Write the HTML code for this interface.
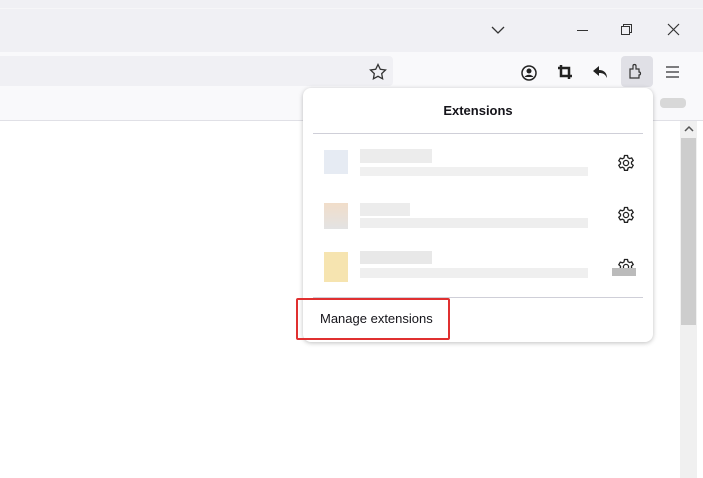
<!DOCTYPE html><html><head><style>
body{margin:0;width:703px;height:478px;overflow:hidden;background:#fff;font-family:"Liberation Sans",sans-serif;position:relative}
.a{position:absolute}
svg{position:absolute}
</style></head><body>
<div class="a" style="left:0;top:0;width:703px;height:52px;background:#f0f0f4"></div>
<div class="a" style="left:0;top:8px;width:703px;height:1px;background:#f6f6f8"></div>
<div class="a" style="left:0;top:52px;width:703px;height:36px;background:#f9f9fb"></div>
<div class="a" style="left:0;top:56px;width:393px;height:30px;background:#f0f0f4;border-radius:0 4px 4px 0"></div>
<div class="a" style="left:0;top:88px;width:703px;height:32px;background:#f9f9fb;border-bottom:1px solid #e0e0e6"></div>
<svg style="left:490px;top:24px" width="16" height="12"><path d="M2 3l6 6 6-6" stroke="#333" fill="none" stroke-width="1.3"/></svg>
<div class="a" style="left:577px;top:30px;width:11px;height:1px;background:#333"></div>
<svg style="left:620px;top:23px" width="14" height="14"><rect x="1.5" y="3.5" width="8" height="8" fill="none" stroke="#333"/><path d="M3.5 3.5V1.5h8v8h-2" fill="none" stroke="#333"/></svg>
<svg style="left:667px;top:23px" width="14" height="14"><path d="M1 1l11 11M12 1L1 12" stroke="#333" stroke-width="1.2"/></svg>
<svg style="left:369px;top:63px" width="18" height="18"><path d="M9 1.5l2.3 4.8 5.2.7-3.8 3.6.9 5.2L9 13.3l-4.6 2.5.9-5.2L1.5 7l5.2-.7z" fill="none" stroke="#333" stroke-width="1.3"/></svg>
<svg style="left:520px;top:64px" width="18" height="18"><circle cx="9" cy="9" r="7" fill="none" stroke="#222" stroke-width="1.5"/><circle cx="9" cy="7" r="2.5" fill="#222"/><path d="M4.5 13c2-3 7-3 9 0" fill="#222"/></svg>
<svg style="left:557px;top:64px" width="16" height="16"><path d="M4 1v11h11M1 4h11v11" fill="none" stroke="#222" stroke-width="2.5"/></svg>
<svg style="left:592px;top:64px" width="18" height="16"><path d="M7 2L1 7l6 5V9c4 0 6 1 8 5 0-5-3-8-8-8z" fill="#222"/></svg>
<div class="a" style="left:621px;top:56px;width:32px;height:31px;background:#e0e0e6;border-radius:4px"></div>
<svg style="left:628px;top:62px" width="18" height="18"><path d="M2 7h3V4c0-2 3-2 3 0v3h3v3c2 0 2 3 0 3v3H2z" fill="none" stroke="#333" stroke-width="1.2"/></svg>
<svg style="left:665px;top:65px" width="16" height="14"><path d="M1 2h13M1 7h13M1 12h13" stroke="#333" stroke-width="1.2"/></svg>
<div class="a" style="left:660px;top:98px;width:26px;height:10px;background:#d8d8d8;border-radius:4px"></div>
<div class="a" style="left:680px;top:121px;width:17px;height:357px;background:#f0f0f0"></div>
<div class="a" style="left:681px;top:138px;width:15px;height:187px;background:#cdcdcd"></div>
<svg style="left:684px;top:125px" width="10" height="8"><path d="M1 6l4-4 4 4" stroke="#555" fill="none" stroke-width="1.5"/></svg>
<div class="a" style="left:303px;top:88px;width:350px;height:254px;background:#fff;border-radius:8px;box-shadow:0 1px 5px rgba(0,0,0,.25)"></div>
<div class="a" style="left:303px;top:103px;width:350px;text-align:center;font-size:13px;font-weight:bold;color:#15141a">Extensions</div>
<div class="a" style="left:313px;top:133px;width:330px;height:1px;background:#cfcfd8"></div>
<div class="a" style="left:313px;top:297px;width:330px;height:1px;background:#cfcfd8"></div>
<div class="a" style="left:324px;top:150px;width:24px;height:24px;background:#e6ebf3"></div>
<div class="a" style="left:324px;top:203px;width:24px;height:26px;background:linear-gradient(#f1ddc9,#e3e3e3)"></div>
<div class="a" style="left:324px;top:252px;width:24px;height:30px;background:#f6e4b0"></div>
<div class="a" style="left:360px;top:149px;width:72px;height:14px;background:#ececec"></div>
<div class="a" style="left:360px;top:167px;width:228px;height:9px;background:#f0f0f0"></div>
<div class="a" style="left:360px;top:203px;width:50px;height:13px;background:#ececec"></div>
<div class="a" style="left:360px;top:218px;width:228px;height:10px;background:#eeeeee"></div>
<div class="a" style="left:360px;top:251px;width:72px;height:13px;background:#e8e8e8"></div>
<div class="a" style="left:360px;top:268px;width:228px;height:10px;background:#efefef"></div>
<svg style="left:617px;top:154px" width="18" height="18"><g fill="none" stroke="#222" stroke-width="1.3"><circle cx="9" cy="9" r="2.6"/><path d="M7.5 1.5h3l.5 2.2 1.6.9 2.1-.7 1.5 2.6-1.7 1.5v1.8l1.7 1.5-1.5 2.6-2.1-.7-1.6.9-.5 2.2h-3l-.5-2.2-1.6-.9-2.1.7-1.5-2.6 1.7-1.5V8.2L1.8 6.7l1.5-2.6 2.1.7 1.6-.9z"/></g></svg>
<svg style="left:617px;top:206px" width="18" height="18"><g fill="none" stroke="#222" stroke-width="1.3"><circle cx="9" cy="9" r="2.6"/><path d="M7.5 1.5h3l.5 2.2 1.6.9 2.1-.7 1.5 2.6-1.7 1.5v1.8l1.7 1.5-1.5 2.6-2.1-.7-1.6.9-.5 2.2h-3l-.5-2.2-1.6-.9-2.1.7-1.5-2.6 1.7-1.5V8.2L1.8 6.7l1.5-2.6 2.1.7 1.6-.9z"/></g></svg>
<svg style="left:617px;top:258px" width="18" height="18"><g fill="none" stroke="#222" stroke-width="1.3"><circle cx="9" cy="9" r="2.6"/><path d="M7.5 1.5h3l.5 2.2 1.6.9 2.1-.7 1.5 2.6-1.7 1.5v1.8l1.7 1.5-1.5 2.6-2.1-.7-1.6.9-.5 2.2h-3l-.5-2.2-1.6-.9-2.1.7-1.5-2.6 1.7-1.5V8.2L1.8 6.7l1.5-2.6 2.1.7 1.6-.9z"/></g></svg>
<div class="a" style="left:612px;top:268px;width:24px;height:8px;background:#bbb"></div>
<div class="a" style="left:320px;top:311px;font-size:13px;color:#15141a">Manage extensions</div>
<div class="a" style="left:296px;top:298px;width:150px;height:38px;border:2px solid #e03030;border-radius:2px"></div>
</body></html>
